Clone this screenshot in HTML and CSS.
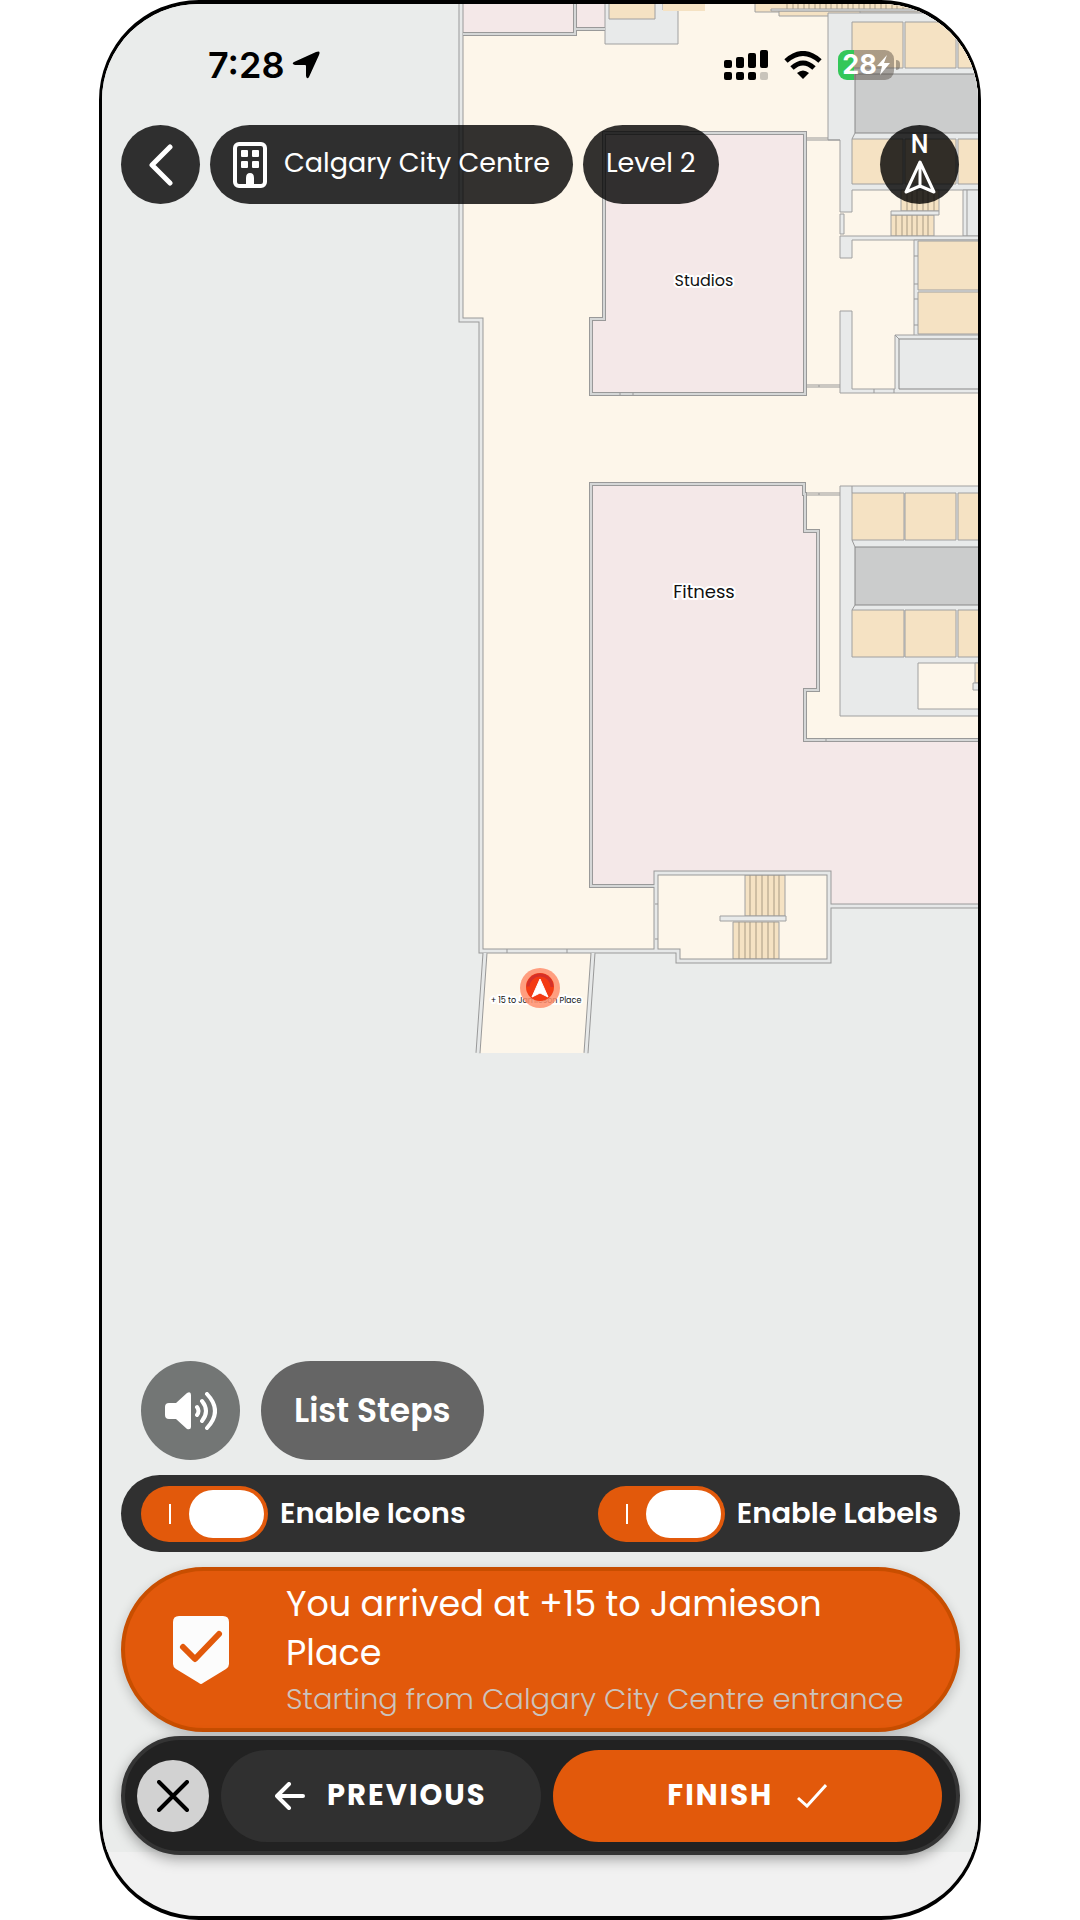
FILE: index.html
```html
<!DOCTYPE html>
<html lang="en">
<head>
<meta charset="utf-8">
<meta name="viewport" content="width=device-width, initial-scale=1">
<title>Calgary City Centre – Level 2</title>
<link rel="stylesheet" href="styles.css">
</head>
<body>
<main class="phone">
  <div class="map">
    <svg class="map-canvas" viewBox="102 4 876 1848" preserveAspectRatio="xMidYMin slice" role="img" aria-label="Floor map of Level 2">
      <defs>
        <path id="shell" d="M461 0V320H481V951H678V961H829V873H656V951"/>
        <path id="edge" d="M829 906H990"/>
        <path id="studios" d="M604 133H805V394H591V319H604Z"/>
        <path id="fitness" d="M656 886H591V484H804V494H805V531H818V690H805V740H990"/>
        <path id="rooms" d="M463 34H575V0M575 29H605"/>
        <path id="ramp" d="M485 953L478 1053M593 953L586 1053"/>
      </defs>

      <!-- corridors -->
      <path class="hall" d="M461 0V320H481V951H678V961H829V906H990V0Z"/>
      <path class="hall" d="M486 953H593L586 1053H479Z"/>

      <!-- rooms -->
      <path class="room" d="M463 0H575V34H463ZM577 0H605V29H577Z"/>
      <path class="room" d="M604 133H805V394H591V319H604Z"/>
      <path class="room" d="M591 484H804V494H805V531H818V690H805V740H990V906H829V873H656V886H591Z"/>

      <!-- upper service core -->
      <path class="core" d="M605 0V44H678V10H663V0Z"/>
      <path class="cell" d="M609 0H655V19H609Z"/>
      <path class="tan" d="M663 0H705V11H663Z"/>
      <path class="cell" d="M755 0H990V12H755Z"/>
      <path class="cell" d="M779 11H860V16H779Z"/>
      <path class="hatch" d="M787 0V9M793 0V9M798 0V9M804 0V9M809 0V9M815 0V9M820 0V9M826 0V9M831 0V9M837 0V9M842 0V9M848 0V9M853 0V9M859 0V9M864 0V9M870 0V9M875 0V9M881 0V9M886 0V9M892 0V9M897 0V9M903 0V9"/>
      <path class="core" d="M771 9H930V11H771Z"/>
      <path class="core" d="M828 13H990V190H852V212H840V140H828Z"/>
      <path class="cell" d="M852 22H903V68H852ZM905 22H956V68H905ZM958 22H990V68H958Z"/>
      <path class="shaft" d="M855 74H990V133H855Z"/>
      <path class="cell" d="M852 139H903V184H852ZM905 139H956V184H905ZM958 139H990V184H958Z"/>
      <path class="wall-line" d="M806 138H828M806 140H840M852 139L855 133"/>
      <path class="core" d="M840 214H844V234H840Z"/>
      <path class="core" d="M963 190H990V236H963Z"/>
      <path class="wall-line" d="M967 190V236"/>
      <path class="cell" d="M901 190H939V211H901ZM891 215H934V236H891Z"/>
      <path class="hatch" d="M907 190V211M912 190V211M917 190V211M923 190V211M928 190V211M934 190V211M896 215V236M902 215V236M907 215V236M912 215V236M917 215V236M923 215V236M928 215V236"/>
      <path class="core" d="M891 211H939V215H891Z"/>
      <path class="core" d="M840 236H990V240H852V258H840Z"/>
      <path class="core" d="M914 240H990V338H914Z"/>
      <path class="cell" d="M918 241H990V290H918ZM918 292H990V334H918Z"/>
      <path class="wall-line" d="M914 256H918M914 284H918M914 299H918M914 325H918"/>
      <path class="core" d="M840 311H852V389H895V335H990V393H840Z"/>
      <path class="box" d="M899 339H990V389H899Z"/>
      <path class="wall-line" d="M895 335L899 339M806 385H840M806 387H840M819 385V387M874 389V393M894 389V393M804 258H806M804 277H806"/>

      <!-- lower service core -->
      <path class="core" d="M840 486H990V716H840Z"/>
      <path class="cell" d="M852 493H904V540H852ZM905 493H956V540H905ZM958 493H990V540H958Z"/>
      <path class="shaft" d="M855 547H990V605H855Z"/>
      <path class="cell" d="M852 610H904V657H852ZM905 610H956V657H905ZM958 610H990V657H958Z"/>
      <path class="wall-line" d="M852 486V493M852 540L855 547M855 605L852 610M806 493H840M806 495H840M819 493V495"/>
      <path class="hall outlined" d="M918 663H990V709H918Z"/>
      <path class="cell" d="M975 663H990V683H975Z"/>
      <path class="core" d="M973 683H990V690H973Z"/>

      <!-- exit stairwell -->
      <path class="hall" d="M656 873H829V961H678V951H656Z"/>
      <path class="cell" d="M745 875H785V916H745ZM733 922H779V959H733Z"/>
      <path class="hatch" d="M750 875V916M756 875V916M762 875V916M768 875V916M774 875V916M779 875V916M739 922V959M745 922V959M750 922V959M756 922V959M762 922V959M768 922V959M774 922V959"/>
      <path class="core" d="M720 916H786V921H720Z"/>

      <!-- double-line walls -->
      <g class="wall-outer">
        <use href="#studios"/><use href="#fitness"/><use href="#rooms"/>
        <g class="thick"><use href="#shell"/><use href="#edge"/><use href="#ramp"/></g>
      </g>
      <g class="wall-inner">
        <use href="#studios"/><use href="#fitness"/><use href="#rooms"/>
        <g class="thick"><use href="#shell"/><use href="#edge"/><use href="#ramp"/></g>
      </g>
      <path class="wall-line" d="M507 949V953M567 949V953M655 904H658M655 939H658M620 393V396M633 393V396M826 739V742"/>

      <!-- place labels -->
      <text class="label label-md" x="704" y="286">Studios</text>
      <text class="label label-lg" x="704" y="598">Fitness</text>
      <text class="label label-sm" x="536" y="1003">+ 15 to Jamieson Place</text>

      <!-- current position -->
      <circle cx="540" cy="988" r="20" fill="#ff8e6c" fill-opacity=".85"/>
      <circle cx="540" cy="987" r="14" fill="#f2360f" fill-opacity=".96"/>
      <circle cx="540" cy="987" r="12" fill="none" stroke="#d4302a" stroke-width="3" stroke-dasharray="38 38" stroke-dashoffset="38"/>
      <path d="M540 979L548 997L540 993L532 997Z" fill="#fff" stroke="#fff" stroke-linejoin="round"/>
    </svg>
  </div>

  <div class="status">
    <div class="status-group">
      <span class="clock">7:28</span>
      <svg width="28" height="28" viewBox="0 0 28 28" aria-hidden="true"><path d="M24 1Q29-1 27 4L17 26Q15 29 14 25V15Q14 14 13 14L3 14Q-1 13 2 11Z"/></svg>
    </div>
    <div class="status-group">
      <svg width="44" height="30" viewBox="0 0 44 30" aria-hidden="true">
        <rect x="0" y="10" width="8" height="8" rx="2"/><rect x="12" y="7" width="8" height="11" rx="2"/><rect x="24" y="3" width="8" height="15" rx="2"/><rect x="36" y="0" width="8" height="18" rx="2"/>
        <rect x="0" y="22" width="8" height="8" rx="2"/><rect x="12" y="22" width="8" height="8" rx="2"/><rect x="24" y="22" width="8" height="8" rx="2"/><rect x="36" y="22" width="8" height="8" rx="2" fill="#c9c4bb"/>
      </svg>
      <svg class="wifi" width="38" height="28" viewBox="0 0 38 28" aria-hidden="true">
        <path d="M2 10Q19-5 36 10M8 17Q19 7 30 17" fill="none" stroke="#000" stroke-width="5"/>
        <path d="M19 28L13 22Q19 17 25 22Z"/>
      </svg>
      <span class="battery">
        <span class="battery-level">28</span>
        <svg width="13" height="20" viewBox="0 0 13 20" aria-hidden="true"><path d="M10 0L0 11H5L3 20L13 8H7Z" fill="#fff"/></svg>
      </span>
    </div>
  </div>

  <header class="topbar">
    <button class="round glass" aria-label="Back">
      <svg width="24" height="42" viewBox="0 0 24 42"><path d="M21 3L3 21L21 39" fill="none" stroke="#fff" stroke-width="5" stroke-linecap="round" stroke-linejoin="round"/></svg>
    </button>
    <button class="pill glass">
      <svg width="34" height="46" viewBox="0 0 34 46" fill="#fff" aria-hidden="true">
        <rect x="2" y="2" width="30" height="42" rx="4" fill="none" stroke="#fff" stroke-width="4"/>
        <rect x="8" y="8" width="7" height="7" rx="1"/><rect x="19" y="8" width="7" height="7" rx="1"/>
        <rect x="8" y="19" width="7" height="7" rx="1"/><rect x="19" y="19" width="7" height="7" rx="1"/>
        <path d="M13 44V36Q13 31 17 31T21 36V44Z"/>
      </svg>
      <span class="pill-text">Calgary City Centre</span>
    </button>
    <button class="pill glass"><span class="pill-text">Level 2</span></button>
    <button class="round glass compass" aria-label="Face north">
      <span class="compass-n">N</span>
      <svg width="32" height="34" viewBox="0 0 32 34"><path d="M16 2L30 32L16 26L2 32ZM16 2V26" fill="none" stroke="#fff" stroke-width="3" stroke-linejoin="round"/></svg>
    </button>
  </header>

  <section class="panel">
    <div class="quick">
      <button class="sound" aria-label="Read aloud">
        <svg width="53" height="38" viewBox="0 0 53 38">
          <path d="M5 11H12L23 1Q27-1 27 3V35Q27 38 23 37L12 27H5Q1 27 1 23V15Q1 11 5 11Z" fill="#fff"/>
          <path d="M33 15Q36 19 33 23M38 9Q46 19 38 29M43 2Q59 19 43 36" fill="none" stroke="#fff" stroke-width="4" stroke-linecap="round"/>
        </svg>
      </button>
      <button class="steps">List Steps</button>
    </div>

    <div class="toggles">
      <label class="toggle"><input class="switch" type="checkbox" checked>Enable Icons</label>
      <label class="toggle"><input class="switch" type="checkbox" checked>Enable Labels</label>
    </div>

    <div class="arrival">
      <svg class="arrival-icon" width="56" height="68" viewBox="0 0 56 68" aria-hidden="true">
        <path d="M6 0H50Q56 0 56 6V48Q56 51 53 53L30 67Q28 69 26 67L3 53Q0 51 0 48V6Q0 0 6 0Z" fill="#fcfcfc"/>
        <path d="M10 31L22 43L46 18" fill="none" stroke="#e2590b" stroke-width="6" stroke-linecap="round" stroke-linejoin="round"/>
      </svg>
      <div>
        <h1 class="arrival-title">You arrived at +15 to Jamieson Place</h1>
        <p class="arrival-from">Starting from Calgary City Centre entrance</p>
      </div>
    </div>

    <nav class="nav">
      <button class="close" aria-label="Close directions">
        <svg width="32" height="32" viewBox="0 0 32 32"><path d="M2 2L30 30M30 2L2 30" stroke="#000" stroke-width="4" stroke-linecap="round"/></svg>
      </button>
      <button class="nav-btn previous">
        <svg width="30" height="28" viewBox="0 0 30 28" aria-hidden="true"><path d="M14 2L2 14L14 26M2 14H28" fill="none" stroke="#fff" stroke-width="4" stroke-linecap="round" stroke-linejoin="round"/></svg>
        PREVIOUS
      </button>
      <button class="nav-btn finish">
        FINISH
        <svg width="30" height="24" viewBox="0 0 30 24" aria-hidden="true"><path d="M1 14L10 22L29 1" fill="none" stroke="#fff" stroke-width="3"/></svg>
      </button>
    </nav>
  </section>
</main>
</body>
</html>
```
FILE: styles.css
```css
* {
  box-sizing: border-box;
}

body {
  margin: 0;
  background: #fff;
  color: #fff;
  font-family: Poppins, Inter, "Liberation Sans", sans-serif;
}

button {
  display: flex;
  align-items: center;
  justify-content: center;
  margin: 0;
  padding: 0;
  border: 0;
  color: inherit;
  font: inherit;
  white-space: nowrap;
  cursor: pointer;
}

.phone {
  position: relative;
  display: flex;
  flex-direction: column;
  max-width: 882px;
  min-height: 100vh;
  margin: 0 auto;
  border: solid #000;
  border-width: 4px 3px;
  border-radius: 100px;
  background: #f1f1f1;
  overflow: hidden;
}

/* Map */
.map {
  position: absolute;
  inset: 0 0 64px;
  background: #eaeceb;
}

.map-canvas {
  display: block;
  width: 100%;
  height: 100%;
}

.hall { fill: #fdf6ea; }
.room { fill: #f4e8e8; }
.tan { fill: #f5e2c3; }
.core, .box, .cell, .shaft, .outlined { stroke: #a0a0a0; }
.core, .box { fill: #e8eaea; }
.cell { fill: #f5e2c3; }
.shaft { fill: #cbcccc; stroke: #888; }
.box { stroke: #888; }
.hatch { stroke: #a89a83; }
.wall-line { fill: none; stroke: #999; }
.wall-outer { fill: none; stroke: #999; stroke-width: 4px; }
.wall-inner { fill: none; stroke: #d5d7d7; stroke-width: 2px; }
.wall-outer .thick { stroke-width: 5px; }
.wall-inner .thick { stroke: #e6e8e8; stroke-width: 3px; }

.label {
  fill: #111;
  stroke: #fff;
  stroke-width: 4px;
  stroke-linejoin: round;
  paint-order: stroke;
  text-anchor: middle;
}

.label-sm { font-size: 8px; }
.label-md { font-size: 16px; }
.label-lg { font-size: 18px; }

/* Status bar */
.status {
  position: relative;
  display: flex;
  align-items: center;
  justify-content: space-between;
  height: 121px;
  padding: 0 84px 0 106px;
  color: #000;
}

.status-group {
  display: flex;
  align-items: center;
  gap: 8px;
}

.clock {
  font-family: Inter, sans-serif;
  font-size: 36px;
  font-weight: 600;
}

.wifi {
  margin: 0 8px;
}

.battery {
  position: relative;
  display: flex;
  align-items: center;
  justify-content: center;
  width: 56px;
  height: 30px;
  border-radius: 9px;
  background: linear-gradient(90deg, #34c759 16px, rgba(80, 70, 60, .45) 16px);
  color: #fff;
}

.battery::after {
  content: "";
  position: absolute;
  left: 58px;
  width: 4px;
  height: 10px;
  border-radius: 0 4px 4px 0;
  background: rgba(80, 70, 60, .45);
}

.battery-level {
  font-family: Inter, sans-serif;
  font-size: 27px;
  font-weight: 700;
}

/* Top controls */
.topbar {
  position: relative;
  display: flex;
  gap: 10px;
  padding: 0 19px;
}

.glass {
  height: 79px;
  border-radius: 40px;
  background: rgba(0, 0, 0, .8);
}

.round {
  width: 79px;
}

.pill {
  gap: 17px;
  padding: 0 23px;
  font-size: 27px;
}

.pill-text {
  padding-bottom: 4px;
}

.compass {
  flex-direction: column;
  gap: 5px;
  margin-left: auto;
}

.compass-n {
  font-family: Roboto, sans-serif;
  font-size: 25px;
  font-weight: 500;
  line-height: 20px;
}

/* Bottom panel */
.panel {
  position: relative;
  margin-top: auto;
  padding: 0 18px 61px 19px;
}

.quick {
  display: flex;
  gap: 21px;
  padding-left: 20px;
}

.sound,
.steps {
  height: 99px;
  border-radius: 50px;
}

.sound {
  width: 99px;
  background: #737675;
}

.steps {
  padding: 0 33px;
  background: #656565;
  font-size: 33px;
  font-weight: 600;
}

.toggles {
  display: flex;
  align-items: center;
  justify-content: space-between;
  height: 77px;
  margin-top: 15px;
  padding: 0 22px 0 20px;
  border-radius: 39px;
  background: #303030;
  font-size: 29px;
  font-weight: 600;
}

.toggle {
  display: flex;
  align-items: center;
  gap: 12px;
}

.switch {
  position: relative;
  width: 127px;
  height: 56px;
  margin: 0;
  border-radius: 28px;
  background: #e2590b;
  appearance: none;
}

.switch::before {
  content: "";
  position: absolute;
  top: 18px;
  left: 28px;
  width: 2px;
  height: 20px;
  background: #fff;
}

.switch::after {
  content: "";
  position: absolute;
  top: 4px;
  right: 4px;
  width: 75px;
  height: 48px;
  border-radius: 24px;
  background: #fff;
}

.arrival {
  display: flex;
  align-items: center;
  gap: 57px;
  min-height: 165px;
  margin-top: 15px;
  padding: 0 40px 0 48px;
  border: 4px solid #c84e00;
  border-radius: 83px;
  background: #e2590b;
  box-shadow: 0 4px 12px rgba(0, 0, 0, .2);
}

.arrival-icon {
  flex: none;
}

.arrival-title,
.arrival-from {
  margin: 0;
}

.arrival-title {
  font-size: 35px;
  font-weight: 400;
  line-height: 49px;
}

.arrival-from {
  color: #ccc3bd;
  font-size: 29px;
  font-weight: 300;
  line-height: 44px;
}

.nav {
  display: flex;
  align-items: center;
  gap: 12px;
  height: 119px;
  margin-top: 4px;
  padding: 0 14px 0 12px;
  border: 4px solid #343434;
  border-radius: 60px;
  background: #222;
  box-shadow: 0 4px 14px rgba(0, 0, 0, .35);
}

.close {
  width: 72px;
  height: 72px;
  border-radius: 50%;
  background: #d2d2d2;
}

.nav-btn {
  height: 92px;
  border-radius: 46px;
  font-size: 29px;
  font-weight: 700;
  letter-spacing: 2px;
}

.previous {
  flex: 320;
  gap: 22px;
  background: #303030;
}

.finish {
  flex: 390;
  gap: 24px;
  background: #e2590b;
}
```
